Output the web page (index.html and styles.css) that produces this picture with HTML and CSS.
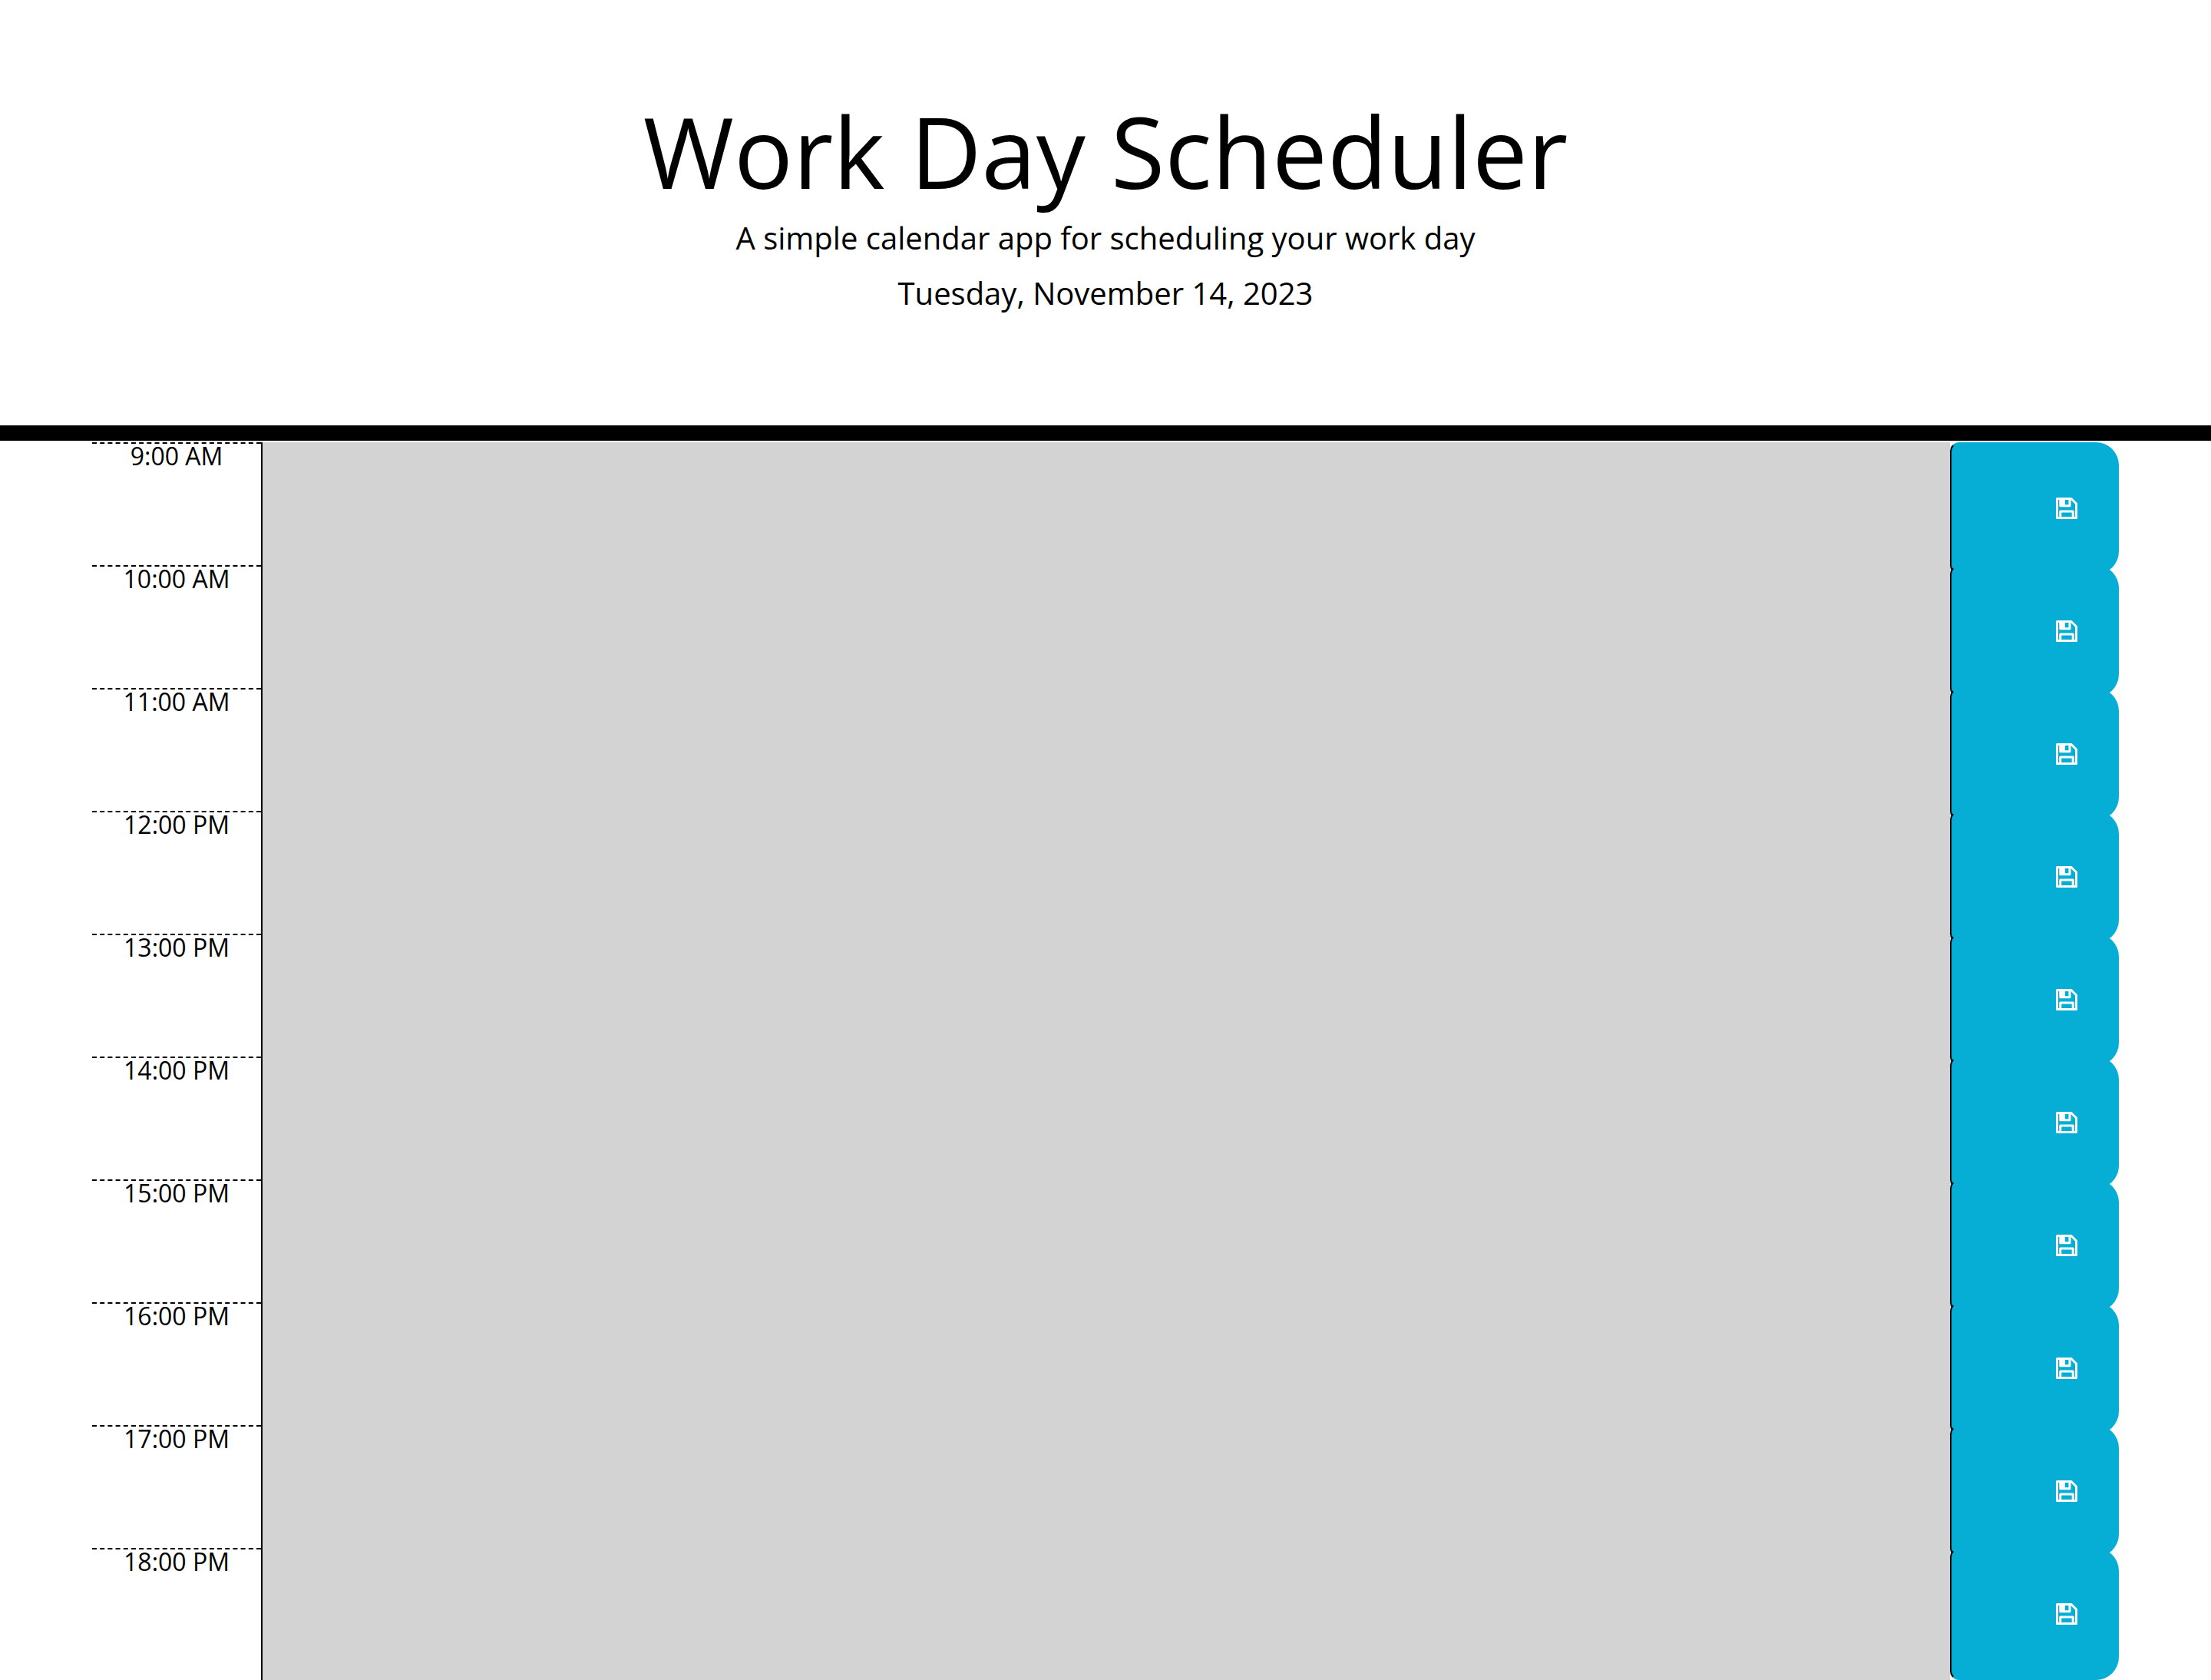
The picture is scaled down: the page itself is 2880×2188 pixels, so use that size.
FILE: index.html
```html
<!DOCTYPE html>
<html lang="en">
<head>
<meta charset="utf-8">
<meta name="viewport" content="width=device-width, initial-scale=1">
<title>Work Day Scheduler</title>
<link rel="stylesheet" href="styles.css">
</head>
<body>
<header class="header">
  <h1 class="title">Work Day Scheduler</h1>
  <p class="lead">A simple calendar app for scheduling your work day</p>
  <p class="lead">Tuesday, November 14, 2023</p>
</header>
<main class="schedule" id="schedule"></main>
<script src="script.js"></script>
</body>
</html>
```
FILE: styles.css
```css
* {
  box-sizing: border-box;
}

body {
  margin: 0;
  background: #fff;
  color: #000;
  font-family: "Open Sans", sans-serif;
  font-size: 32px;
  line-height: 1;
}

.header {
  padding: 120px 48px 130px;
  border-bottom: 20px solid #000;
  text-align: center;
}

.title {
  margin: 0 0 6px;
  font-size: 128px;
  font-weight: 400;
  line-height: 154px;
}

.lead {
  margin: 0 0 12px;
  font-size: 40px;
  line-height: 60px;
}

.schedule {
  margin: 2px 120px 0;
  padding-bottom: 12px;
}

/* Fields and buttons are taller than their row and run into the next one. */
.time-block {
  display: grid;
  grid-template-columns: 1fr 10fr 1fr;
  height: 160px;
}

.hour {
  border-top: 2px dashed #000;
  text-align: center;
}

.description {
  display: block;
  width: 100%;
  height: 172px;
  margin: 0;
  padding: 4px;
  border: 0;
  border-left: 2px solid #000;
  border-radius: 0;
  outline: 0;
  resize: none;
  background: #d3d3d3;
  color: #000;
  font: inherit;
}

.save {
  display: flex;
  align-items: center;
  justify-content: flex-end;
  height: 172px;
  margin: 0;
  padding: 0 52px 0 0;
  border: 2px solid transparent;
  border-left-color: #000;
  border-radius: 12px 30px 30px 12px;
  background: #06aed5;
  color: #fff;
  cursor: pointer;
}

.icon {
  display: block;
  width: 28px;
  height: 28px;
}
```
FILE: script.js
```js
const schedule = document.getElementById("schedule");

for (let hour = 9; hour <= 18; hour++) {
  const label = `${hour}:00 ${hour < 12 ? "AM" : "PM"}`;
  schedule.insertAdjacentHTML("beforeend", `
    <section class="time-block">
      <label class="hour" for="hour-${hour}">${label}</label>
      <textarea class="description" id="hour-${hour}"></textarea>
      <button class="save" type="button" aria-label="Save ${label}">
        <svg class="icon" viewBox="0 0 28 28" fill="none" stroke="currentColor" stroke-width="3" stroke-linejoin="round" aria-hidden="true">
          <path d="M1.5 1.5H20L26.5 8V26.5H1.5Z"/>
          <path d="M5.8 1.5V10.7H18V1.5M5.8 26.5V18H22.2V26.5"/>
          <path d="M5 1H11.8V11H5Z" fill="currentColor" stroke="none"/>
        </svg>
      </button>
    </section>`);
}
```
